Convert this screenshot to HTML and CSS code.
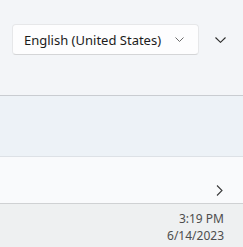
FILE: index.html
```html
<!DOCTYPE html>
<html lang="en">
<head>
    <meta charset="UTF-8">
    <meta name="viewport" content="width=device-width, initial-scale=1.0">
    <title>Language</title>
    <link rel="stylesheet" href="styles.css">
</head>
<body>

    <!-- Language picker -->
    <div class="top">
        <div class="lang-row">
            <div class="select">
                <span class="select-text">English (United States)</span>
                <svg class="select-chevron" width="9" height="5" viewBox="0 0 9 5">
                    <path d="M0.5 0.5 L4.5 4.5 L8.5 0.5" fill="none" stroke="#6b6b6b" stroke-width="1"/>
                </svg>
            </div>
            <div class="expand">
                <svg width="11" height="6" viewBox="0 0 11 6">
                    <path d="M0.5 0.5 L5.5 5.3 L10.5 0.5" fill="none" stroke="#2b2b2b" stroke-width="1.1"/>
                </svg>
            </div>
        </div>
    </div>

    <div class="band"></div>

    <div class="row">
        <svg width="7" height="11" viewBox="0 0 7 11">
            <path d="M1 0.5 L6 5.5 L1 10.5" fill="none" stroke="#3a3a3a" stroke-width="1.1"/>
        </svg>
    </div>

    <div class="footer">
        <div class="clock">
            <div>3:19 PM</div>
            <div>6/14/2023</div>
        </div>
    </div>

</body>
</html>
```

FILE: styles.css
```css
body {
    margin: 0;
    font-family: "Noto Sans", sans-serif;
    background: #f3f5f8;
    width: 243px;
    height: 247px;
    overflow: hidden;
}

.top {
    height: 96px;
    border-bottom: 1px solid #c9ccd1;
    box-sizing: border-box;
    padding: 24px 0 0 12px;
}

.lang-row {
    display: flex;
    align-items: center;
}

.select {
    width: 187px;
    height: 31px;
    box-sizing: border-box;
    background: #fdfdfe;
    border: 1px solid #e6e7e9;
    border-bottom-color: #d4d5d7;
    border-radius: 4px;
    display: flex;
    align-items: center;
    padding: 0 14px 0 11px;
}

.select-text {
    flex: 1;
    font-size: 13px;
    color: #1b1b1b;
    white-space: nowrap;
}

.expand {
    width: 42px;
    display: flex;
    justify-content: center;
}

.band {
    height: 60px;
    background: #edf2f7;
    border-bottom: 1px solid #dde1e6;
}

.row {
    height: 47px;
    background: #f9fafc;
    border-bottom: 1px solid #cfd1d3;
    display: flex;
    align-items: flex-end;
    justify-content: flex-end;
    padding: 0 20px 7px 0;
    box-sizing: border-box;
}

.footer {
    height: 43px;
    background: #eef0f1;
    display: flex;
    justify-content: flex-end;
    padding: 6px 19px 0 0;
    box-sizing: border-box;
}

.clock {
    text-align: right;
    font-size: 12px;
    line-height: 17px;
    color: #4d4d4d;
}
```
